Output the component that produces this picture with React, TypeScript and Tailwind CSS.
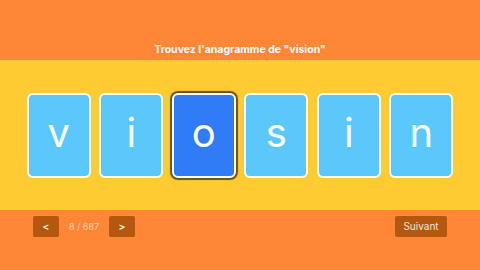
const letters = ["v", "i", "o", "s", "i", "n"];
const selected = 2;

export default function App() {
    return (
        <div className="w-[480px] h-[270px] flex flex-col bg-[#fd8637] font-['Inter',sans-serif] overflow-hidden">
            <div className="h-[60px] flex items-end justify-center pb-[5px]">
                <h1 className="text-[10.5px] font-bold text-white leading-none">
                    Trouvez l'anagramme de "vision"
                </h1>
            </div>

            <div className="h-[150px] bg-[#ffcb33] flex items-center justify-center gap-[8.5px]">
                {letters.map((l, i) => (
                    <div
                        key={i}
                        className={
                            i === selected
                                ? "w-[64px] h-[85px] rounded-[6px] border-2 border-white bg-[#2f7cf6] flex items-center justify-center shadow-[0_0_1px_2px_#6b5320]"
                                : "w-[64px] h-[85px] rounded-[6px] border-2 border-white bg-[#5ac8fa] flex items-center justify-center"
                        }
                    >
                        <span className="text-white text-[40px] font-normal leading-none pb-[4px]">{l}</span>
                    </div>
                ))}
            </div>

            <div className="flex-1 flex items-start justify-between px-[33px] pt-[6px]">
                <div className="flex items-center">
                    <button className="w-[26px] h-[21px] rounded-[2px] bg-[#b4570f] text-[#fbe3cc] text-[10px] font-bold flex items-center justify-center">
                        &lt;
                    </button>
                    <span className="w-[50px] text-center text-[9px] text-[#fbd2ad]">8 / 687</span>
                    <button className="w-[26px] h-[21px] rounded-[2px] bg-[#b4570f] text-[#fbe3cc] text-[10px] font-bold flex items-center justify-center">
                        &gt;
                    </button>
                </div>
                <button className="w-[52px] h-[21px] rounded-[2px] bg-[#b4570f] text-[#fbe3cc] text-[10px] flex items-center justify-center">
                    Suivant
                </button>
            </div>
        </div>
    );
}
